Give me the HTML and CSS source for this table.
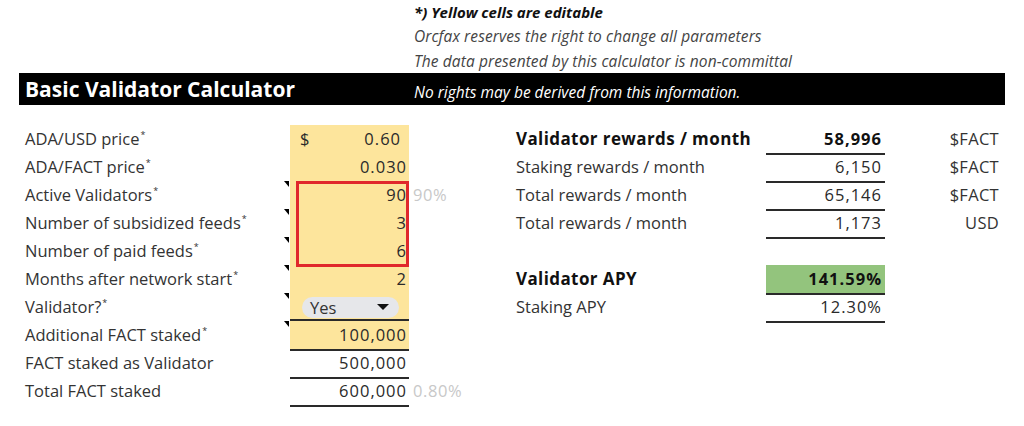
FILE: index.html
```html
<!DOCTYPE html>
<html lang="en">
<head>
<meta charset="utf-8">
<title>Basic Validator Calculator</title>
<link rel="stylesheet" href="styles.css">
</head>
<body>
<div class="page">
  <div class="notes">
    <div class="note note-bold">*) Yellow cells are editable</div>
    <div class="note">Orcfax reserves the right to change all parameters</div>
    <div class="note">The data presented by this calculator is non-committal</div>
  </div>
  <div class="bar">
    <div class="bar-title">Basic Validator Calculator</div>
    <div class="bar-note">No rights may be derived from this information.</div>
  </div>
  <div class="main">
    <div class="table left">
      <div class="row"><div class="label">ADA/USD price<sup>*</sup></div><div class="val edit line currency"><span>$</span><span>0.60</span></div><div class="extra"></div></div>
      <div class="row"><div class="label">ADA/FACT price<sup>*</sup></div><div class="val edit">0.030</div><div class="extra"></div></div>
      <div class="row"><div class="label">Active Validators<sup>*</sup></div><div class="val edit line flag">90</div><div class="extra">90%</div></div>
      <div class="row"><div class="label">Number of subsidized feeds<sup>*</sup></div><div class="val edit line flag">3</div><div class="extra"></div></div>
      <div class="row"><div class="label">Number of paid feeds<sup>*</sup></div><div class="val edit flag">6</div><div class="extra"></div></div>
      <div class="row"><div class="label">Months after network start<sup>*</sup></div><div class="val edit line flag">2</div><div class="extra"></div></div>
      <div class="row"><div class="label">Validator?<sup>*</sup></div><div class="val edit line flag"><span class="chip"><span>Yes</span><span class="caret"></span></span></div><div class="extra"></div></div>
      <div class="row"><div class="label">Additional FACT staked<sup>*</sup></div><div class="val edit line flag">100,000</div><div class="extra"></div></div>
      <div class="row"><div class="label">FACT staked as Validator</div><div class="val line">500,000</div><div class="extra"></div></div>
      <div class="row"><div class="label">Total FACT staked</div><div class="val line">600,000</div><div class="extra">0.80%</div></div>
      <div class="redbox"></div>
    </div>
    <div class="table right">
      <div class="row strong"><div class="label">Validator rewards / month</div><div class="val line">58,996</div><div class="unit">$FACT</div></div>
      <div class="row"><div class="label">Staking rewards / month</div><div class="val line">6,150</div><div class="unit">$FACT</div></div>
      <div class="row"><div class="label">Total rewards / month</div><div class="val line">65,146</div><div class="unit">$FACT</div></div>
      <div class="row"><div class="label">Total rewards / month</div><div class="val line">1,173</div><div class="unit">USD</div></div>
      <div class="row"><div class="label"></div><div class="val"></div><div class="unit"></div></div>
      <div class="row strong"><div class="label">Validator APY</div><div class="val line green">141.59%</div><div class="unit"></div></div>
      <div class="row"><div class="label">Staking APY</div><div class="val line">12.30%</div><div class="unit"></div></div>
    </div>
  </div>
</div>
</body>
</html>
```

FILE: styles.css
```css
* { box-sizing: border-box; }
html, body { margin: 0; padding: 0; background: #fff; }
body {
  font-family: "Open Sans", "Lato", sans-serif;
  color: #2b2b2b;
}
.page { width: 1024px; height: 426px; overflow: hidden; }

.notes { padding-left: 414px; }
.note {
  font-style: italic;
  font-size: 15.5px;
  letter-spacing: 0.1px;
  line-height: 24.3px;
  height: 24.3px;
  color: #444;
  white-space: nowrap;
}
.note-bold { font-weight: 700; color: #111; font-size: 15px; letter-spacing: 0; }

.bar {
  margin: 0 19px;
  height: 32px;
  background: #000;
  color: #fff;
  display: flex;
  align-items: center;
}
.bar-title {
  width: 395px;
  padding-left: 6px;
  font-weight: 700;
  font-size: 21px;
  padding-top: 1px;
  white-space: nowrap;
}
.bar-note {
  font-style: italic;
  font-size: 15.5px;
  padding-top: 6px;
  white-space: nowrap;
}

.main {
  display: flex;
  padding-left: 25px;
  margin-top: 20px;
}
.table { position: relative; }
.left { width: 491px; }
.row {
  display: grid;
  height: 28px;
  font-size: 16.5px;
  line-height: 28px;
}
.left .row { grid-template-columns: 265px 119px 1fr; }
.right .row { grid-template-columns: 250px 119px 114px; }
.label { white-space: nowrap; color: #333; }
.label sup { font-size: 9px; vertical-align: 7px; line-height: 0; margin-left: 1px; }
.val {
  position: relative;
  text-align: right;
  padding-right: 2px;
  letter-spacing: 1px;
  color: #2a2a2a;
}
.edit { background: #fde59c; }
.line { border-bottom: 2px solid #2a2a2a; }
.currency {
  display: flex;
  justify-content: space-between;
  padding-left: 10px;
  padding-right: 8px;
}
.flag::before {
  content: "";
  position: absolute;
  left: -6px;
  top: 0;
  width: 0;
  height: 0;
  border-top: 6px solid #000;
  border-left: 5px solid transparent;
}
.extra {
  padding-left: 4px;
  color: #c8c8c8;
  letter-spacing: 0.6px;
}
.chip {
  position: absolute;
  left: 12px;
  top: 4px;
  width: 97px;
  height: 21px;
  border-radius: 11px;
  background: #e6e7ea;
  display: flex;
  align-items: center;
  justify-content: space-between;
  padding: 0 10px 0 8px;
  line-height: 21px;
  color: #333;
  letter-spacing: 0;
}
.caret {
  width: 0; height: 0;
  border-left: 6px solid transparent;
  border-right: 6px solid transparent;
  border-top: 6px solid #111;
}
.redbox {
  position: absolute;
  left: 271px;
  top: 56px;
  width: 113px;
  height: 86px;
  border: 3px solid #e0282c;
  pointer-events: none;
}

.strong .label, .strong .val { font-weight: 700; color: #111; }
.strong .label { font-size: 17px; letter-spacing: 0.4px; }
.right .val { padding-right: 3px; }
.unit { text-align: right; color: #333; letter-spacing: 0.3px; }
.green { background: #93c47d; }
```
